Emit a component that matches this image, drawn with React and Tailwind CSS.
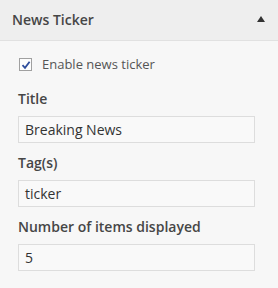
export default function App() {
  const font = { fontFamily: '"Open Sans", sans-serif' };
  return (
    <div className="w-[278px] h-[288px] bg-[#f7f7f7]" style={font}>
      <div className="h-[41px] bg-[#eeeeee] border-b border-[#e1e1e1] flex items-center justify-between pl-[12px] pr-[13px]">
        <span className="text-[14px] font-semibold text-[#464646] leading-none">News Ticker</span>
        <svg width="8" height="6" viewBox="0 0 8 6" className="mb-[2px]">
          <polygon points="4,0 8,6 0,6" fill="#333" />
        </svg>
      </div>
      <div className="pl-[18px] pr-[23px] pt-[17px]">
        <label className="flex items-center h-[13px] pl-[1px]">
          <span className="w-[13px] h-[13px] border border-[#a0a0a0] bg-[#fdfdfd] flex items-center justify-center shrink-0">
            <svg width="10" height="10" viewBox="0 0 10 10">
              <path d="M1.5 5.2 L4 7.8 L8.6 1.8" fill="none" stroke="#2e4d9c" strokeWidth="1.8" />
            </svg>
          </span>
          <span className="ml-[10px] text-[13px] text-[#555] leading-none">Enable news ticker</span>
        </label>
        <div className="mt-[18px] flex flex-col gap-[10px]">
          {[
            ["Title", "Breaking News"],
            ["Tag(s)", "ticker"],
            ["Number of items displayed", "5"],
          ].map(([l, v]) => (
            <div key={l}>
              <div className="text-[14px] font-semibold text-[#464646] leading-[20px] mb-[7px]">{l}</div>
              <div className="h-[27px] border border-[#dddddd] bg-[#f9f9f9] flex items-center px-[6px] text-[14px] text-[#333]">
                {v}
              </div>
            </div>
          ))}
        </div>
      </div>
    </div>
  );
}
